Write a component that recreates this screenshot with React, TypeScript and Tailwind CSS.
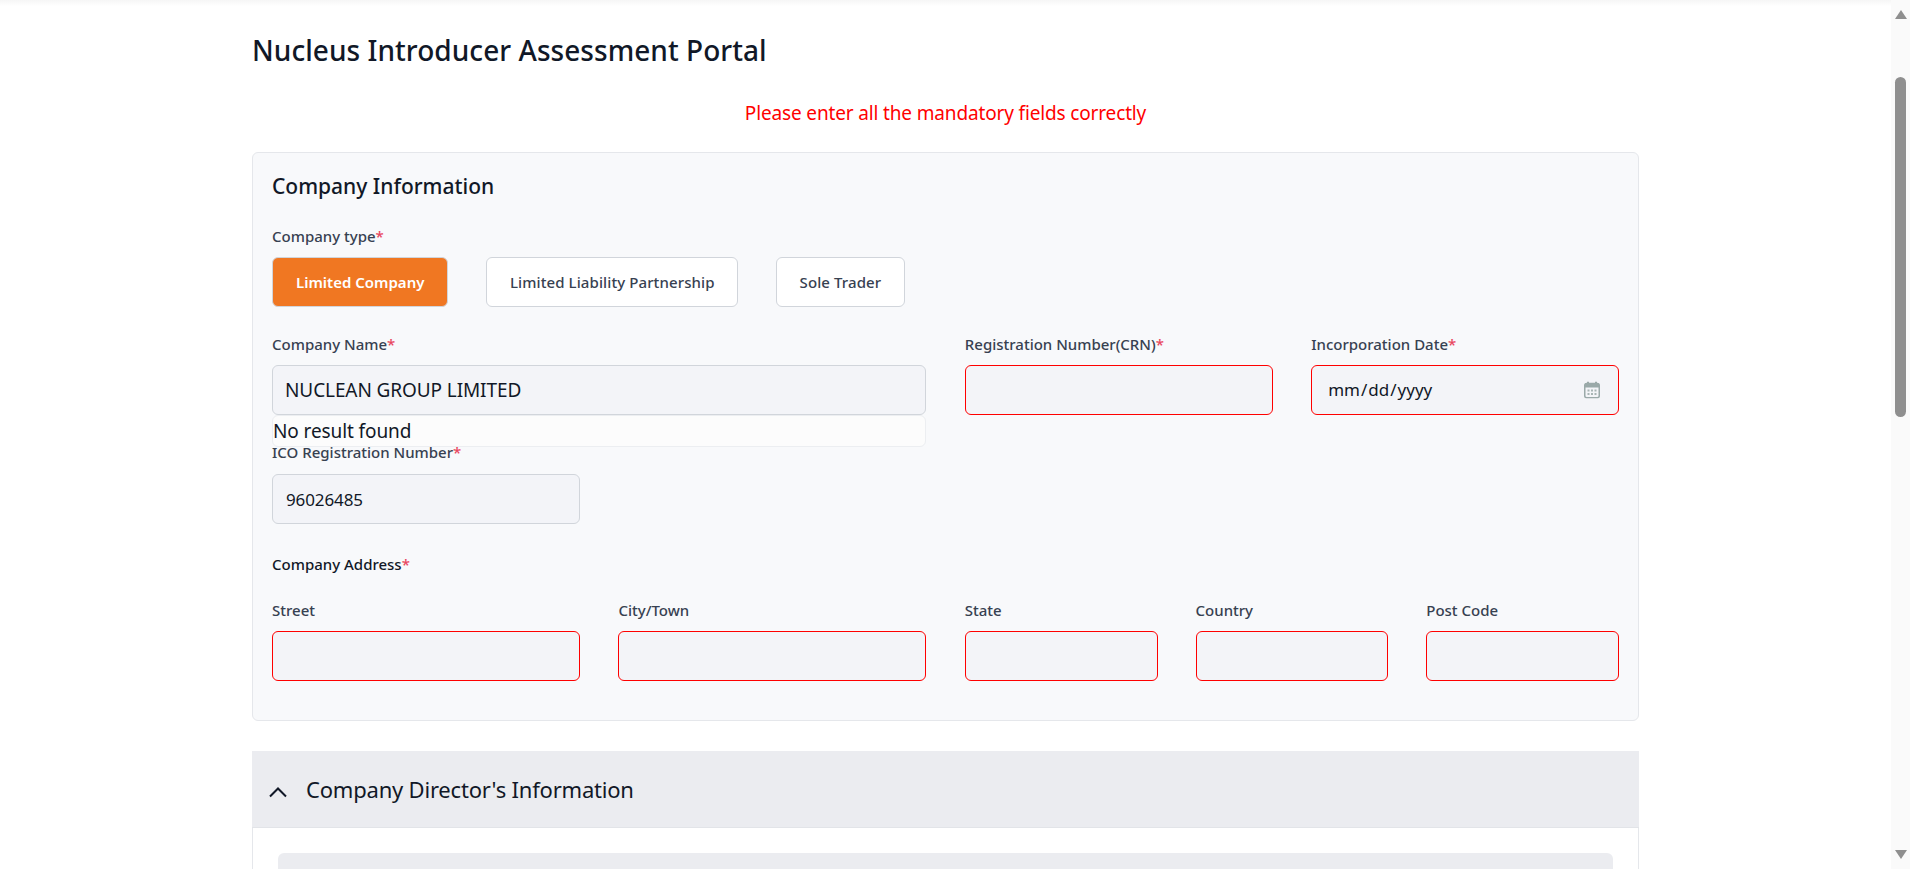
import React from "react";

const font = { fontFamily: '"Noto Sans", "Open Sans", sans-serif' };

function Label({ text, required }: { text: string; required?: boolean }) {
  return (
    <label className="block h-[20px] text-[15px] leading-[20px] font-medium text-[#374151] whitespace-nowrap">
      {text}
      {required && <span className="text-[#e8475f]">*</span>}
    </label>
  );
}

function CalendarIcon() {
  return (
    <svg
      width="16"
      height="17"
      viewBox="0 0 16 17"
      className="pointer-events-none absolute top-1/2 right-[19px] -translate-y-1/2"
    >
      <rect x="3" y="0" width="2" height="3" fill="#9aa9a9" />
      <rect x="11" y="0" width="2" height="3" fill="#9aa9a9" />
      <rect x="0.75" y="2" width="14.5" height="14.25" rx="2" fill="#f3f4f8" stroke="#9aa9a9" strokeWidth="1.5" />
      <rect x="1" y="2" width="14" height="4" fill="#9aa9a9" />
      <path
        d="M3.5 8h2v2h-2zM7 8h2v2H7zM10.5 8h2v2h-2zM3.5 11.5h2v2h-2zM7 11.5h2v2H7zM10.5 11.5h2v2h-2z"
        fill="#a8b5b5"
      />
    </svg>
  );
}

function Field({
  label,
  required,
  value,
  invalid,
  type = "text",
  gap = "gap-[11px]",
  text = "text-[17px] tracking-[-0.1px] px-[13px]",
}: {
  label: string;
  required?: boolean;
  value?: string;
  invalid?: boolean;
  type?: string;
  gap?: string;
  text?: string;
}) {
  return (
    <div className={`flex flex-col ${gap}`}>
      <Label text={label} required={required} />
      <div className="relative">
        <input
          type={type}
          defaultValue={value ?? ""}
          className={`block h-[50px] w-full rounded-md border bg-[#f3f4f8] text-[#111827] outline-none [&::-webkit-calendar-picker-indicator]:opacity-0 ${text} ${
            invalid ? "border-[#ff0000]" : "border-[#d1d5db]"
          }`}
        />
        {type === "date" && <CalendarIcon />}
      </div>
    </div>
  );
}

function TypeButton({ text, active }: { text: string; active?: boolean }) {
  return (
    <button
      className={`h-[50px] rounded-md border border-[#d1d5db] text-[15px] ${
        active
          ? "bg-[#f07722] px-[23px] font-semibold text-white"
          : "bg-white px-[22.5px] font-medium text-[#374151] tracking-[0.1px]"
      }`}
    >
      {text}
    </button>
  );
}

export default function App() {
  return (
    <div className="flex h-[869px] overflow-hidden bg-white" style={font}>
      <main className="relative flex-1 overflow-hidden">
        {/* top bar shadow */}
        <div className="absolute inset-x-0 top-0 h-[6px] bg-gradient-to-b from-[#f6f6f6] to-white" />
        <div className="mx-auto w-[1387px]">
          <h1 className="pt-[31px] text-[28px] leading-[38px] font-[550] text-[#111827] tracking-[0.05px]">
            Nucleus Introducer Assessment Portal
          </h1>
          <p className="mt-[30px] text-center text-[19px] leading-[28px] text-[#ff0000] tracking-[-0.15px]">
            Please enter all the mandatory fields correctly
          </p>

          {/* Company information card */}
          <section className="mt-[25px] h-[569px] rounded-md border border-[#e5e7eb] bg-[#f8f9fb] px-[19px] pt-[18px]">
            <h2 className="text-[21px] leading-[30px] font-medium text-[#111827]">
              Company Information
            </h2>
            <div className="mt-[25px]">
              <Label text="Company type" required />
            </div>
            <div className="mt-[11px] flex gap-[38px]">
              <TypeButton text="Limited Company" active />
              <TypeButton text="Limited Liability Partnership" />
              <TypeButton text="Sole Trader" />
            </div>

            <div className="mt-[27px] grid grid-cols-4 gap-x-[38.6px]">
              <div className="col-span-2">
                <Field
                  label="Company Name"
                  required
                  value="NUCLEAN GROUP LIMITED"
                  text="text-[19px] tracking-[-0.1px] px-[12px]"
                />
                <div className="h-[32px] rounded-md border border-[#eceef1] bg-[#fcfcfc] text-[19px] leading-[31px] text-[#111827] tracking-[-0.1px]">
                  No result found
                </div>
              </div>
              <Field label="Registration Number(CRN)" required invalid />
              <Field
                label="Incorporation Date"
                required
                invalid
                type="date"
                text="text-[17px] tracking-[0px] pl-[15px] pr-[13px]"
              />
            </div>

            <div className="-mt-[5px] grid grid-cols-4 gap-x-[38.6px]">
              <Field label="ICO Registration Number" required value="96026485" gap="gap-[12px]" />
            </div>

            <h3 className="mt-[30px] text-[15px] leading-[20px] font-medium text-[#111827]">
              Company Address<span className="text-[#e8475f]">*</span>
            </h3>

            <div className="mt-[26px] grid grid-cols-2 gap-x-[38.6px]">
              <div className="grid grid-cols-2 gap-x-[38.6px]">
                <Field label="Street" invalid />
                <Field label="City/Town" invalid />
              </div>
              <div className="grid grid-cols-3 gap-x-[38px]">
                <Field label="State" invalid />
                <Field label="Country" invalid />
                <Field label="Post Code" invalid />
              </div>
            </div>
          </section>

          {/* Directors accordion */}
          <section className="mt-[30px]">
            <div className="flex h-[77px] items-center gap-[18px] border-b border-[#e2e4e8] bg-[#ebecf0] pl-[16px]">
              <svg width="20" height="12" viewBox="0 0 20 12" fill="none" className="mt-[6px] shrink-0">
                <path d="M2 10.5 L10 2.5 L18 10.5" stroke="#111827" strokeWidth="2" />
              </svg>
              <h2 className="text-[22px] font-normal text-[#111827] tracking-[-0.2px]">
                Company Director's Information
              </h2>
            </div>
            <div className="h-[200px] border-x border-[#e5e7eb] bg-white px-[25px] pt-[25px]">
              <div className="h-[100px] rounded-md bg-[#ebecf0]" />
            </div>
          </section>
        </div>
      </main>

      {/* scrollbar */}
      <aside className="flex w-[19px] flex-col items-center bg-[#fafafa]">
        <svg width="12" height="9" viewBox="0 0 12 9" className="mt-[10px] shrink-0">
          <path d="M6 0 L12 9 L0 9 Z" fill="#8f8f8f" />
        </svg>
        <div className="mt-[58px] h-[340px] w-[11px] shrink-0 rounded-full bg-[#8f8f8f]" />
        <svg width="12" height="9" viewBox="0 0 12 9" className="mt-auto mb-[10px] shrink-0">
          <path d="M0 0 L12 0 L6 9 Z" fill="#8f8f8f" />
        </svg>
      </aside>
    </div>
  );
}
